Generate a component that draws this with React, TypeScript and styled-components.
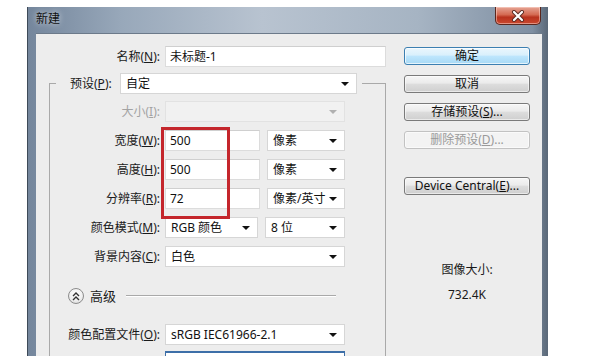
import styled, { createGlobalStyle } from "styled-components";

const GlobalStyle = createGlobalStyle`
  html, body {
    margin: 0;
    padding: 0;
    background: #ffffff;
  }
  body {
    font-family: "Noto Sans", "Noto Sans CJK SC", sans-serif;
    font-size: 12px;
    color: #1a1a1a;
    overflow: hidden;
  }
`;

const Window = styled.div`
  margin: 7px 0 0 27px;
  width: 521px;
  height: 370px;
  box-sizing: border-box;
  display: flex;
  flex-direction: column;
  border-left: 1px solid #3e4a58;
  background: linear-gradient(
    90deg,
    #74869c 0%,
    #98a8ba 18%,
    #b8c3d0 45%,
    #a6b4c3 75%,
    #7f8fa2 97%,
    #5a6878 100%
  );
`;

const TitleBar = styled.div`
  height: 26px;
  flex-shrink: 0;
  display: flex;
  align-items: flex-start;
  padding: 0 7px 0 8px;
`;

const Title = styled.span`
  line-height: 24px;
  color: #111;
  text-shadow: 0 0 6px rgba(255, 255, 255, 0.8);
`;

const CloseButton = styled.div`
  margin-left: auto;
  width: 46px;
  height: 18px;
  box-sizing: border-box;
  display: flex;
  align-items: center;
  justify-content: center;
  border: 1px solid #5a261d;
  border-top: none;
  border-radius: 0 0 5px 5px;
  background: linear-gradient(180deg, #e6a595 0%, #d46a52 45%, #b8321d 60%, #c9482f 100%);
  box-shadow: inset 0 0 0 1px rgba(255, 220, 210, 0.5);
`;

const Body = styled.div`
  flex: 1;
  margin: 0 6px 0 8px;
  display: flex;
  gap: 18px;
  padding: 12px 12px 0 0;
  background: #ededed;
  border-top: 1px solid #6c7a8a;
  overflow: hidden;
`;

const LeftColumn = styled.div`
  width: 350px;
  display: flex;
  flex-direction: column;
`;

const NameRow = styled.div`
  display: grid;
  grid-template-columns: 124px 221px;
  column-gap: 5px;
  align-items: center;
`;

const Label = styled.span<{ disabled?: boolean }>`
  text-align: right;
  line-height: 21px;
  white-space: nowrap;
  color: ${({ disabled }) => (disabled ? "#a3a3a3" : "#1a1a1a")};
`;

const LegendLabel = styled(Label)`
  min-width: 46px;
  text-align: left;
`;

const TextBox = styled.div<{ width?: number }>`
  height: 21px;
  width: ${({ width }) => (width ? `${width}px` : "auto")};
  box-sizing: border-box;
  padding: 0 4px;
  line-height: 19px;
  background: #ffffff;
  border: 1px solid #dcdcdc;
  border-top-color: #cfcfcf;
  color: #111;
  white-space: nowrap;
`;

const Select = styled.div<{ width?: number; disabled?: boolean; focused?: boolean }>`
  position: relative;
  height: 21px;
  width: ${({ width }) => (width ? `${width}px` : "auto")};
  box-sizing: border-box;
  padding: 0 18px 0 5px;
  line-height: 19px;
  white-space: nowrap;
  overflow: hidden;
  color: #111;
  background: ${({ disabled }) => (disabled ? "#f1f1f1" : "#ffffff")};
  border: 1px solid ${({ disabled }) => (disabled ? "#e2e2e2" : "#d6d6d6")};
  ${({ focused }) => (focused ? "border-color: #3d6fa8; border-top-width: 2px;" : "")}

  &::after {
    content: "";
    position: absolute;
    right: 7px;
    top: 8px;
    border-left: 4px solid transparent;
    border-right: 4px solid transparent;
    border-top: 4px solid ${({ disabled }) => (disabled ? "#b0b0b0" : "#111")};
  }
`;

const GroupBox = styled.fieldset`
  margin: 6px 0 0 13px;
  width: 337px;
  box-sizing: border-box;
  padding: 0 0 12px;
  border: 1px solid #a9a9a9;
  min-inline-size: 0;
`;

const GroupLegend = styled.legend`
  margin-left: 6px;
  padding: 0 5px 0 14px;
`;

const LegendRow = styled.div`
  display: flex;
  align-items: center;
  gap: 4px;
`;

const FieldGrid = styled.div<{ rowGap: number; top: number }>`
  position: relative;
  margin-top: ${({ top }) => top}px;
  display: grid;
  grid-template-columns: 110px 180px;
  column-gap: 5px;
  row-gap: ${({ rowGap }) => rowGap}px;
  align-items: center;
`;

const Pair = styled.div`
  display: flex;
  gap: 7px;
`;

const Highlight = styled.div`
  position: absolute;
  left: 111px;
  top: 26px;
  width: 69px;
  height: 92px;
  box-sizing: border-box;
  border: 3px solid #c4262c;
  pointer-events: none;
`;

const AdvancedRow = styled.div`
  margin: 21px 49px 0 18px;
  height: 16px;
  display: flex;
  align-items: center;
  gap: 6px;
`;

const ToggleCircle = styled.div`
  width: 16px;
  height: 16px;
  box-sizing: border-box;
  border-radius: 50%;
  border: 1px solid #8c8c8c;
  background: radial-gradient(circle at 50% 35%, #ffffff 0%, #f0f0f0 55%, #d2d2d2 100%);
  display: flex;
  align-items: center;
  justify-content: center;
  flex-shrink: 0;
`;

const AdvancedText = styled.span`
  line-height: 16px;
  font-size: 13px;
`;

const Rule = styled.div`
  flex: 1;
  height: 0;
  margin-left: 4px;
  border-top: 1px solid #a9a9a9;
  border-bottom: 1px solid #ffffff;
`;

const RightColumn = styled.div`
  width: 126px;
  display: flex;
  flex-direction: column;
  padding-top: 1px;
`;

const Button = styled.div<{ primary?: boolean; disabled?: boolean; top?: number }>`
  height: 18px;
  margin-top: ${({ top }) => (top !== undefined ? top : 10)}px;
  box-sizing: border-box;
  border-radius: 3px;
  text-align: center;
  line-height: 16px;
  white-space: nowrap;
  color: ${({ disabled }) => (disabled ? "#9a9a9a" : "#111")};
  border: 1px solid
    ${({ primary, disabled }) =>
      primary ? "#3c7fb1" : disabled ? "#c2c2c2" : "#7a7a7a"};
  background: ${({ primary, disabled }) =>
    primary
      ? "linear-gradient(180deg, #eaf6fd 0%, #d9f0fc 45%, #bee6fd 50%, #a7d9f5 100%)"
      : disabled
      ? "#f3f3f3"
      : "linear-gradient(180deg, #f6f6f6 0%, #ebebeb 45%, #dddddd 50%, #cfcfcf 100%)"};
  box-shadow: inset 0 0 0 1px
    ${({ primary }) => (primary ? "rgba(255,255,255,0.7)" : "rgba(255,255,255,0.55)")};
`;

const SizeInfo = styled.div`
  margin-top: 67px;
  display: flex;
  flex-direction: column;
  align-items: center;
  gap: 9px;
  line-height: 16px;
  color: #1a1a1a;
`;

const Key = ({ children }: { children: string }) => <u>{children}</u>;

const App = () => {
  return (
    <>
      <GlobalStyle />
      <Window>
        <TitleBar>
          <Title>新建</Title>
          <CloseButton>
            <svg width="14" height="12" viewBox="0 0 14 12">
              <path
                d="M3 2 L11 10 M11 2 L3 10"
                stroke="#5a2a22"
                strokeWidth="4"
                strokeLinecap="round"
              />
              <path
                d="M3 2 L11 10 M11 2 L3 10"
                stroke="#ffffff"
                strokeWidth="2.2"
                strokeLinecap="round"
              />
            </svg>
          </CloseButton>
        </TitleBar>

        <Body>
          <LeftColumn>
            <NameRow>
              <Label>
                名称(<Key>N</Key>):
              </Label>
              <TextBox>未标题-1</TextBox>
            </NameRow>

            <GroupBox>
              <GroupLegend>
                <LegendRow>
                  <LegendLabel>
                    预设(<Key>P</Key>):
                  </LegendLabel>
                  <Select width={237}>自定</Select>
                </LegendRow>
              </GroupLegend>

              <FieldGrid rowGap={8} top={7}>
                <Label disabled>
                  大小(<Key>I</Key>):
                </Label>
                <Select disabled />

                <Label>
                  宽度(<Key>W</Key>):
                </Label>
                <Pair>
                  <TextBox width={95}>500</TextBox>
                  <Select width={78}>像素</Select>
                </Pair>

                <Label>
                  高度(<Key>H</Key>):
                </Label>
                <Pair>
                  <TextBox width={95}>500</TextBox>
                  <Select width={78}>像素</Select>
                </Pair>

                <Label>
                  分辨率(<Key>R</Key>):
                </Label>
                <Pair>
                  <TextBox width={95}>72</TextBox>
                  <Select width={78}>像素/英寸</Select>
                </Pair>

                <Label>
                  颜色模式(<Key>M</Key>):
                </Label>
                <Pair>
                  <Select width={93}>RGB 颜色</Select>
                  <Select width={80}>8 位</Select>
                </Pair>

                <Label>
                  背景内容(<Key>C</Key>):
                </Label>
                <Select>白色</Select>

                <Highlight />
              </FieldGrid>

              <AdvancedRow>
                <ToggleCircle>
                  <svg width="8" height="9" viewBox="0 0 8 9">
                    <path
                      d="M1 4 L4 1 L7 4 M1 8 L4 5 L7 8"
                      stroke="#333"
                      strokeWidth="1.4"
                      fill="none"
                    />
                  </svg>
                </ToggleCircle>
                <AdvancedText>高级</AdvancedText>
                <Rule />
              </AdvancedRow>

              <FieldGrid rowGap={6} top={20}>
                <Label>
                  颜色配置文件(<Key>O</Key>):
                </Label>
                <Select>sRGB IEC61966-2.1</Select>

                <Label />
                <Select focused />
              </FieldGrid>
            </GroupBox>
          </LeftColumn>

          <RightColumn>
            <Button primary top={0}>
              确定
            </Button>
            <Button>取消</Button>
            <Button>
              存储预设(<Key>S</Key>)...
            </Button>
            <Button disabled>
              删除预设(<Key>D</Key>)...
            </Button>
            <Button top={28}>
              Device Central(<Key>E</Key>)...
            </Button>
            <SizeInfo>
              <span>图像大小:</span>
              <span>732.4K</span>
            </SizeInfo>
          </RightColumn>
        </Body>
      </Window>
    </>
  );
};

export default App;
